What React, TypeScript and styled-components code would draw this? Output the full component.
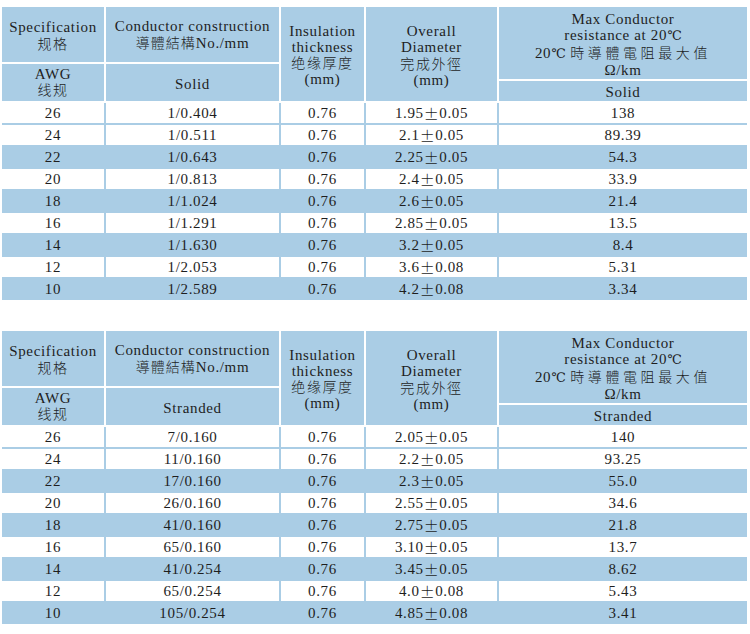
import React from "react";
import styled, { createGlobalStyle } from "styled-components";

const BLUE = "#aacde5";
const COLS = "102px 173px 83px 131px 248px";

const Global = createGlobalStyle`
  html, body { margin: 0; padding: 0; background: #ffffff; }
  body {
    font-family: "Liberation Serif", "DejaVu Serif", "Noto Sans CJK SC", serif;
    color: #1e1e1e;
  }
`;

const Page = styled.div`
  display: flex;
  flex-direction: column;
  gap: 31px;
  padding: 7px 3px 0 2px;
  width: 745px;
`;

const Table = styled.section`
  display: flex;
  flex-direction: column;
  gap: 2px;
`;

const Head = styled.div`
  display: grid;
  grid-template-columns: ${COLS};
  grid-template-rows: 55px 15px 20px;
  gap: 2px;
  background: #ffffff;
`;

const HeadCell = styled.div<{ $col: string; $row: string; $lh?: number; $pt?: number }>`
  grid-column: ${(p) => p.$col};
  grid-row: ${(p) => p.$row};
  background: ${BLUE};
  display: flex;
  flex-direction: column;
  align-items: center;
  justify-content: center;
  text-align: center;
  font-size: 15px;
  line-height: ${(p) => p.$lh ?? 16}px;
  letter-spacing: 0.65px;
  padding-top: ${(p) => p.$pt ?? 0}px;
  box-sizing: border-box;
`;

const Line = styled.span`
  display: block;
  white-space: nowrap;
  letter-spacing: 0.65px;
`;

const Degree = styled.span`
  font-size: 13px;
  letter-spacing: 0;
`;

const Han = styled.span<{ $gap?: number }>`
  font-family: "Noto Sans CJK SC", "Noto Sans CJK TC", sans-serif;
  font-size: 14px;
  font-weight: 300;
  letter-spacing: ${(p) => p.$gap ?? 1.6}px;
`;

const Body = styled.div`
  display: flex;
  flex-direction: column;
  gap: 2px;
  background: ${BLUE};
  padding-bottom: 1px;
`;

const Row = styled.div`
  display: grid;
  grid-template-columns: ${COLS};
  grid-auto-rows: 20px;
  column-gap: 2px;
`;

const Cell = styled.div<{ $blue: boolean }>`
  background: ${(p) => (p.$blue ? BLUE : "#ffffff")};
  display: flex;
  align-items: center;
  justify-content: center;
  font-size: 15px;
  letter-spacing: 0.65px;
  white-space: nowrap;
`;

const Pm = styled.span`
  font-family: "Noto Sans CJK SC", sans-serif;
  font-weight: 300;
  letter-spacing: 0;
  margin-right: 0.5px;
`;

type Spec = [string, string, string, string, string];

const solid: Spec[] = [
  ["26", "1/0.404", "0.76", "1.95±0.05", "138"],
  ["24", "1/0.511", "0.76", "2.1±0.05", "89.39"],
  ["22", "1/0.643", "0.76", "2.25±0.05", "54.3"],
  ["20", "1/0.813", "0.76", "2.4±0.05", "33.9"],
  ["18", "1/1.024", "0.76", "2.6±0.05", "21.4"],
  ["16", "1/1.291", "0.76", "2.85±0.05", "13.5"],
  ["14", "1/1.630", "0.76", "3.2±0.05", "8.4"],
  ["12", "1/2.053", "0.76", "3.6±0.08", "5.31"],
  ["10", "1/2.589", "0.76", "4.2±0.08", "3.34"],
];

const stranded: Spec[] = [
  ["26", "7/0.160", "0.76", "2.05±0.05", "140"],
  ["24", "11/0.160", "0.76", "2.2±0.05", "93.25"],
  ["22", "17/0.160", "0.76", "2.3±0.05", "55.0"],
  ["20", "26/0.160", "0.76", "2.55±0.05", "34.6"],
  ["18", "41/0.160", "0.76", "2.75±0.05", "21.8"],
  ["16", "65/0.160", "0.76", "3.10±0.05", "13.7"],
  ["14", "41/0.254", "0.76", "3.45±0.05", "8.62"],
  ["12", "65/0.254", "0.76", "4.0±0.08", "5.43"],
  ["10", "105/0.254", "0.76", "4.85±0.08", "3.41"],
];

const renderValue = (v: string) => {
  if (!v.includes("±")) return v;
  const [a, b] = v.split("±");
  return (
    <>
      {a}
      <Pm>±</Pm>
      {b}
    </>
  );
};

function SpecTable({ kind, rows }: { kind: string; rows: Spec[] }) {
  return (
    <Table>
      <Head>
        <HeadCell $col="1" $row="1" $pt={2}>
          <Line>Specification</Line>
          <Line><Han>规格</Han></Line>
        </HeadCell>
        <HeadCell $col="1" $row="2 / 4" $lh={15}>
          <Line>AWG</Line>
          <Line><Han>线规</Han></Line>
        </HeadCell>
        <HeadCell $col="2" $row="1">
          <Line>Conductor construction</Line>
          <Line><Han $gap={1}>導體結構</Han>No./mm</Line>
        </HeadCell>
        <HeadCell $col="2" $row="2 / 4" $pt={2}>
          <Line>{kind}</Line>
        </HeadCell>
        <HeadCell $col="3" $row="1 / 4" $lh={15.5} $pt={3}>
          <Line>Insulation</Line>
          <Line>thickness</Line>
          <Line><Han>绝缘厚度</Han></Line>
          <Line>(mm)</Line>
        </HeadCell>
        <HeadCell $col="4" $row="1 / 4" $pt={3}>
          <Line>Overall</Line>
          <Line>Diameter</Line>
          <Line><Han>完成外徑</Han></Line>
          <Line>(mm)</Line>
        </HeadCell>
        <HeadCell $col="5" $row="1 / 3" $pt={2}>
          <Line>Max Conductor</Line>
          <Line>resistance at 20<Degree>℃</Degree></Line>
          <Line>20<Degree>℃</Degree> <Han $gap={3.6}>時導體電阻最大值</Han></Line>
          <Line>Ω/km</Line>
        </HeadCell>
        <HeadCell $col="5" $row="3" $pt={1}>
          <Line>{kind}</Line>
        </HeadCell>
      </Head>
      <Body>
        {rows.map((r, i) => {
          const blue = i >= 2 && i % 2 === 0;
          return (
            <Row key={r[0]}>
              {r.map((v, j) => (
                <Cell key={j} $blue={blue}>
                  {renderValue(v)}
                </Cell>
              ))}
            </Row>
          );
        })}
      </Body>
    </Table>
  );
}

export default function App() {
  return (
    <>
      <Global />
      <Page>
        <SpecTable kind="Solid" rows={solid} />
        <SpecTable kind="Stranded" rows={stranded} />
      </Page>
    </>
  );
}
